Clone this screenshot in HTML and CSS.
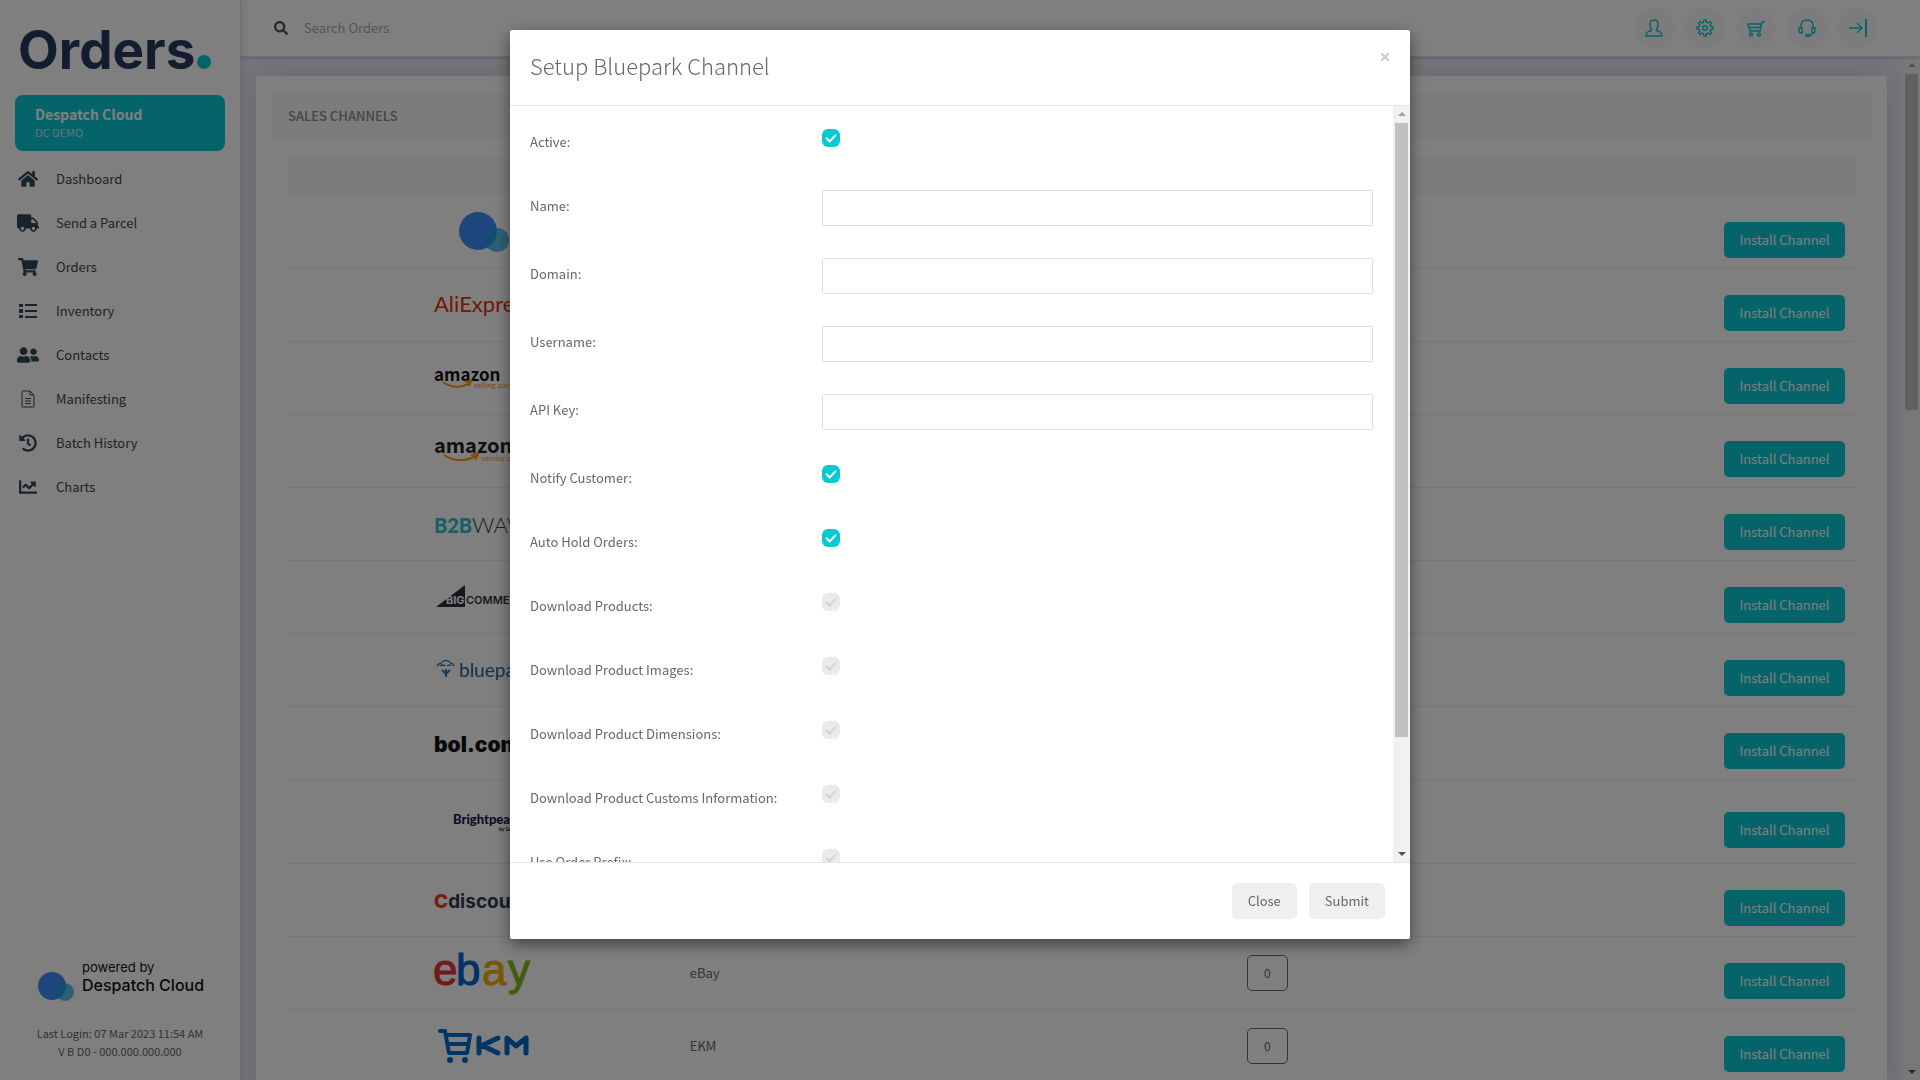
FILE: index.html
```
<!DOCTYPE html>
<html lang="en">
<head>
  <meta charset="UTF-8" />
  <meta name="viewport" content="width=device-width, initial-scale=1.0"/>
  <title>Orders - Sales Channels</title>
  <link rel="stylesheet" href="styles.css">
</head>
<body>
  <aside class="sidebar">
    <a href="#" class="brand">Orders<span class="brand-dot"></span></a>

    <div class="account">
      <strong>Despatch Cloud</strong>
      <small>DC DEMO</small>
    </div>

    <nav class="menu">
      <a href="#">
        <svg width="20" height="18" viewBox="0 0 576 512"><path d="M280.37 148.26L96 300.11V464a16 16 0 0 0 16 16l112.06-.29a16 16 0 0 0 15.92-16V368a16 16 0 0 1 16-16h64a16 16 0 0 1 16 16v95.64a16 16 0 0 0 16 16.05L464 480a16 16 0 0 0 16-16V300L295.67 148.26a12.19 12.19 0 0 0-15.3 0zM571.6 251.47L488 182.56V44.05a12 12 0 0 0-12-12h-56a12 12 0 0 0-12 12v72.61L318.47 43a48 48 0 0 0-61 0L4.34 251.47a12 12 0 0 0-1.6 16.9l25.5 31A12 12 0 0 0 45.15 301l235.22-193.74a12.19 12.19 0 0 1 15.3 0L530.9 301a12 12 0 0 0 16.9-1.6l25.5-31a12 12 0 0 0-1.7-16.93z"/></svg>
        <span>Dashboard</span>
      </a>
      <a href="#">
        <svg width="22" height="18" viewBox="0 0 640 512"><path d="M624 352h-16V243.900c0-12.700-5.100-24.900-14.100-33.900L494 110.100c-9-9-21.200-14.100-33.900-14.100H416V48c0-26.500-21.500-48-48-48H48C21.500 0 0 21.500 0 48v320c0 26.500 21.500 48 48 48h16c0 53 43 96 96 96s96-43 96-96h128c0 53 43 96 96 96s96-43 96-96h48c8.800 0 16-7.200 16-16v-32c0-8.800-7.200-16-16-16zM160 464c-26.500 0-48-21.500-48-48s21.500-48 48-48 48 21.500 48 48-21.500 48-48 48zm320 0c-26.500 0-48-21.500-48-48s21.500-48 48-48 48 21.500 48 48-21.500 48-48 48zm80-208H416V144h44.100l99.900 99.900V256z"/></svg>
        <span>Send a Parcel</span>
      </a>
      <a href="#">
        <svg width="20" height="18" viewBox="0 0 576 512"><path d="M528.12 301.319l47.273-208C578.806 78.301 567.391 64 551.99 64H159.208l-9.166-44.81C147.758 8.021 137.93 0 126.529 0H24C10.745 0 0 10.745 0 24v16c0 13.255 10.745 24 24 24h69.883l70.248 343.435C147.325 417.1 136 435.222 136 456c0 30.928 25.072 56 56 56s56-25.072 56-56c0-15.674-6.447-29.835-16.824-40h209.647C430.447 426.165 424 440.326 424 456c0 30.928 25.072 56 56 56s56-25.072 56-56c0-22.172-12.888-41.332-31.579-50.405l5.517-24.276c3.413-15.018-8.002-29.319-23.403-29.319H218.117l-6.545-32h293.145c11.206 0 20.92-7.754 23.403-18.681z"/></svg>
        <span>Orders</span>
      </a>
      <a href="#">
        <svg width="18" height="18" viewBox="0 0 18 18"><path d="M0 2h4v3H0zM0 7h4v4H0zM0 13h4v3H0zM6 2h12v2H6zM6 8h12v2H6zM6 14h12v2H6z"/></svg>
        <span>Inventory</span>
      </a>
      <a href="#">
        <svg width="22" height="18" viewBox="0 0 640 512"><path d="M192 256c61.900 0 112-50.100 112-112S253.900 32 192 32 80 82.100 80 144s50.100 112 112 112zm76.800 32h-8.300c-20.800 10-43.900 16-68.500 16s-47.600-6-68.500-16h-8.300C51.600 288 0 339.600 0 403.200V432c0 26.500 21.500 48 48 48h288c26.500 0 48-21.500 48-48v-28.800c0-63.600-51.600-115.200-115.200-115.200zM480 256c53 0 96-43 96-96s-43-96-96-96-96 43-96 96 43 96 96 96zm48 32h-3.800c-13.900 4.800-28.600 8-44.200 8s-30.300-3.200-44.200-8H432c-20.400 0-39.200 5.900-55.700 15.400 24.400 26.300 39.700 61.200 39.700 99.800v38.400c0 2.200-.5 4.300-.6 6.400H592c26.500 0 48-21.500 48-48 0-61.900-50.100-112-112-112z"/></svg>
        <span>Contacts</span>
      </a>
      <a href="#">
        <svg class="line" width="18" height="18" viewBox="0 0 18 18"><path d="M11 1H4Q3 1 3 2v14q0 1 1 1h10q1 0 1-1V5zM11 1v4h4M6 8.500h6M6 11h6M6 13.500h6"/></svg>
        <span>Manifesting</span>
      </a>
      <a href="#">
        <svg width="18" height="18" viewBox="0 0 512 512"><path d="M504 255.531c.253 136.640-111.180 248.372-247.820 248.468-59.015.042-113.223-20.530-155.822-54.911-11.077-8.940-11.905-25.541-1.839-35.607l11.267-11.267c8.609-8.609 22.353-9.551 31.891-1.984C173.062 425.135 212.781 440 256 440c101.705 0 184-82.311 184-184 0-101.705-82.311-184-184-184-48.814 0-93.149 18.969-126.068 49.932l50.754 50.754c10.080 10.080 2.941 27.314-11.313 27.314H24c-8.837 0-16-7.163-16-16V38.627c0-14.254 17.234-21.393 27.314-11.314l49.372 49.372C129.209 34.136 189.552 8 256 8c136.810 0 247.747 110.780 248 247.531zm-180.912 78.784l9.823-12.630c8.138-10.463 6.253-25.542-4.210-33.679L288 256.349V152c0-13.255-10.745-24-24-24h-16c-13.255 0-24 10.745-24 24v135.651l65.409 50.874c10.463 8.137 25.541 6.253 33.679-4.210z"/></svg>
        <span>Batch History</span>
      </a>
      <a href="#">
        <svg width="18" height="18" viewBox="0 0 512 512"><path d="M496 384H64V80c0-8.840-7.160-16-16-16H16C7.160 64 0 71.160 0 80v336c0 17.670 14.330 32 32 32h464c8.840 0 16-7.160 16-16v-32c0-8.840-7.160-16-16-16zM464 96H345.940c-21.380 0-32.090 25.850-16.970 40.970l32.400 32.400L288 242.750l-73.370-73.370c-12.500-12.500-32.760-12.500-45.250 0l-68.690 68.690c-6.250 6.250-6.250 16.380 0 22.630l22.620 22.620c6.250 6.250 16.380 6.250 22.630 0L192 237.250l73.370 73.370c12.500 12.500 32.760 12.500 45.250 0l96-96 32.400 32.400c15.120 15.120 40.970 4.410 40.970-16.970V112c.01-8.840-7.150-16-15.990-16z"/></svg>
        <span>Charts</span>
      </a>
    </nav>

    <div class="powered">
      <svg width="36" height="30" viewBox="0 0 36 30"><circle cx="14" cy="14" r="14" fill="#3f8cfb"/><circle cx="27" cy="20" r="9" fill="#1da1e0" fill-opacity=".7"/></svg>
      <p>powered by<b>Despatch Cloud</b></p>
    </div>
    <p class="login-info">Last Login: 07 Mar 2023 11:54 AM<br/>V B D0 - 000.000.000.000</p>
  </aside>

  <div class="main">
    <header class="topbar">
      <label class="search">
        <svg width="14" height="14" viewBox="0 0 512 512"><path d="M505 442.700L405.300 343c-4.500-4.500-10.600-7-17-7H372c27.600-35.300 44-79.700 44-128C416 93.100 322.900 0 208 0S0 93.100 0 208s93.100 208 208 208c48.300 0 92.700-16.400 128-44v16.300c0 6.400 2.500 12.500 7 17l99.700 99.700c9.400 9.400 24.600 9.400 33.900 0l28.300-28.300c9.400-9.400 9.400-24.600.1-34zM208 336c-70.700 0-128-57.200-128-128 0-70.700 57.200-128 128-128 70.700 0 128 57.200 128 128 0 70.700-57.200 128-128 128z"/></svg>
        <input type="text" placeholder="Search Orders" aria-label="Search Orders" />
      </label>
      <div class="top-icons">
        <a href="#" aria-label="Profile"><svg viewBox="0 0 18 18"><path d="M6.500 11.500v-1C5 9 5 7.500 5 5q0-4 4-4t4 4c0 2.500 0 4-1.500 5.500v1c3 1 5.500 1.500 5.500 5.500H1c0-4 2.500-4.500 5.500-5.500z"/></svg></a>
        <a href="#" aria-label="Settings"><svg viewBox="0 0 18 18"><circle cx="9" cy="9" r="2.200"/><path d="M8 1h2l.5 2.300 1.300.6 2.100-1.300 1.500 1.500-1.300 2.100.6 1.300L17 8v2l-2.300.5-.6 1.300 1.300 2.100-1.500 1.500-2.100-1.300-1.300.6L10 17H8l-.5-2.300-1.300-.6-2.100 1.300-1.500-1.500 1.300-2.100-.6-1.300L1 10V8l2.300-.5.6-1.300-1.300-2.100 1.500-1.500 2.100 1.300 1.300-.6z"/></svg></a>
        <a href="#" aria-label="Basket"><svg viewBox="0 0 18 18"><path d="M18 3h-3l-2 9H3L1 5h13.500M2 8.500h12"/><circle cx="4" cy="15.500" r="1.500"/><circle cx="12" cy="15.500" r="1.500"/></svg></a>
        <a href="#" aria-label="Support"><svg viewBox="0 0 18 18"><path d="M3 9V7q0-6 6-6t6 6v2M15 13q0 3-4 3.500"/><path d="M1 9h3v5H3Q1 14 1 12zM17 9h-3v5h1q2 0 2-2zM8 15.500h3v2H8z"/></svg></a>
        <a href="#" aria-label="Log out"><svg viewBox="0 0 18 18"><path d="M0 9h13M8 4l5 5-5 5"/><path d="M17 0v18" stroke-width="2"/></svg></a>
      </div>
    </header>

    <div class="content">
      <div class="page">
        <section class="card">
          <h2>SALES CHANNELS</h2>
          <div class="table-wrap">
            <table class="channels">
              <thead>
                <tr><th></th><th></th><th></th><th></th></tr>
              </thead>
              <tbody>
                <tr>
                  <td><svg width="50" height="40" viewBox="0 0 50 40"><circle cx="19" cy="19" r="19" fill="#3f8cfb"/><circle cx="38" cy="28" r="12" fill="#1da1e0" fill-opacity=".7"/></svg></td>
                  <td>Despatch Cloud</td><td><span class="count">0</span></td><td><button type="button" class="btn-install">Install Channel</button></td>
                </tr>
                <tr>
                  <td><svg width="100" height="40" viewBox="0 0 100 40"><text class="logo-text" x="0" y="27" font-size="22" fill="#e62e04">AliExpress</text></svg></td>
                  <td>AliExpress</td><td><span class="count">0</span></td><td><button type="button" class="btn-install">Install Channel</button></td>
                </tr>
                <tr>
                  <td><svg width="100" height="40" viewBox="0 0 100 40"><text class="logo-bold" x="0" y="23" font-size="17" fill="#111">amazon</text><text class="logo-text" x="40" y="30" font-size="8" fill="#f90">selling partner</text><path d="M9 24q13 9 27 1M31 24l6-1-2 5" fill="none" stroke="#f90" stroke-width="2"/></svg></td>
                  <td>Amazon</td><td><span class="count">0</span></td><td><button type="button" class="btn-install">Install Channel</button></td>
                </tr>
                <tr>
                  <td><svg width="100" height="40" viewBox="0 0 100 40"><text class="logo-bold" x="0" y="22" font-size="20" fill="#222">amazon</text><text class="logo-text" x="47" y="30" font-size="8" fill="#f90">vendor central</text><path d="M10 24q15 10 32 1M37 24l7-1-3 6" fill="none" stroke="#f90" stroke-width="2"/></svg></td>
                  <td>Amazon Vendor</td><td><span class="count">0</span></td><td><button type="button" class="btn-install">Install Channel</button></td>
                </tr>
                <tr>
                  <td><svg width="100" height="40" viewBox="0 0 100 40"><text class="logo-text" x="0" y="29" font-size="20" font-weight="900" fill="#2bc0cc">B2B</text><text class="logo-text" x="38" y="29" font-size="22" font-weight="300" fill="#444">WAVE</text></svg></td>
                  <td>B2B Wave</td><td><span class="count">0</span></td><td><button type="button" class="btn-install">Install Channel</button></td>
                </tr>
                <tr>
                  <td><svg width="100" height="40" viewBox="0 0 100 40"><path d="M2 30L31 8v22z" fill="#34313f"/><text class="logo-inter" x="12" y="27" font-size="11" font-weight="700" fill="#fff">BIG</text><text class="logo-inter" x="32" y="27" font-size="11" font-weight="600" fill="#34313f">COMMERCE</text></svg></td>
                  <td>BigCommerce</td><td><span class="count">0</span></td><td><button type="button" class="btn-install">Install Channel</button></td>
                </tr>
                <tr>
                  <td><svg width="100" height="40" viewBox="0 0 100 40"><g fill="none" stroke="#3c77b4"><path d="M3 16q2-3 5-3M8 12q4-3 8 0M16 13q3 0 4 3M6 16q3-2 5 0M13 16q2-2 4 0" stroke-width="1.500"/><path d="M12 27v-8M12 24l-4-4M12 24l4-4" stroke-width="2"/></g><text class="logo-text" x="25" y="27" font-size="19" fill="#2d5f99">bluepark</text></svg></td>
                  <td>Bluepark</td><td><span class="count">0</span></td><td><button type="button" class="btn-install">Install Channel</button></td>
                </tr>
                <tr>
                  <td><svg width="100" height="40" viewBox="0 0 100 40"><text class="logo-inter" x="0" y="29" font-size="21" font-weight="900" fill="#111">bol.com</text></svg></td>
                  <td>bol.com</td><td><span class="count">0</span></td><td><button type="button" class="btn-install">Install Channel</button></td>
                </tr>
                <tr class="tall">
                  <td><svg width="100" height="40" viewBox="0 0 100 40"><text class="logo-text" x="19" y="22" font-size="13" font-weight="900" fill="#101c4d">Brightpearl</text><text class="logo-text" x="65" y="29" font-size="5" font-weight="700" fill="#101c4d">by Sage</text></svg></td>
                  <td>Brightpearl</td><td><span class="count">0</span></td><td><button type="button" class="btn-install">Install Channel</button></td>
                </tr>
                <tr>
                  <td><svg width="100" height="40" viewBox="0 0 100 40"><text class="logo-inter" x="0" y="28" font-size="19" font-weight="700" fill="#2b3e55"><tspan fill="#f23c0f" font-weight="800">C</tspan>discount</text></svg></td>
                  <td>Cdiscount</td><td><span class="count">0</span></td><td><button type="button" class="btn-install">Install Channel</button></td>
                </tr>
                <tr>
                  <td><svg width="100" height="44" viewBox="0 0 100 44"><g class="logo-arial" font-size="44"><text x="-1" y="34" fill="#e53238" stroke="#e53238">e</text><text x="22" y="34" fill="#0064d2" stroke="#0064d2">b</text><text x="48" y="34" fill="#f5af02" stroke="#f5af02">a</text><text x="74" y="34" fill="#86b817" stroke="#86b817">y</text></g></svg></td>
                  <td>eBay</td><td><span class="count">0</span></td><td><button type="button" class="btn-install">Install Channel</button></td>
                </tr>
                <tr>
                  <td><svg width="100" height="40" viewBox="0 0 100 40"><g fill="none" stroke="#0069c8" stroke-width="5" stroke-linecap="round" stroke-linejoin="round"><path d="M6 5h5l4 22h18l3-18H14M15 18h18" stroke-width="4"/><path d="M45 12v15M64 12L48 19.500 64 27M73 27V12l9 8 10-8v15"/></g><circle cx="16" cy="34" r="3" fill="#0069c8"/><circle cx="31" cy="34" r="3" fill="#0069c8"/></svg></td>
                  <td>EKM</td><td><span class="count">0</span></td><td><button type="button" class="btn-install">Install Channel</button></td>
                </tr>
              </tbody>
            </table>
          </div>
        </section>
      </div>
      <div class="scrollbar" aria-hidden="true"><i class="arrow up"></i><div class="track"><div class="thumb thumb-page"></div></div><i class="arrow down"></i></div>
    </div>
  </div>

  <div class="backdrop">
    <form class="modal" role="dialog" aria-labelledby="modalTitle">
      <div class="modal-header">
        <h1 id="modalTitle">Setup Bluepark Channel</h1>
        <button type="button" class="btn-x" aria-label="Close dialog"><svg width="8" height="8" viewBox="0 0 8 8"><path d="M0 0l8 8M8 0L0 8"/></svg></button>
      </div>
      <div class="modal-scroll">
        <div class="modal-body">
          <div class="form-row"><label for="active">Active:</label><input type="checkbox" id="active" checked /></div>
          <div class="form-row"><label for="name">Name:</label><input type="text" id="name" /></div>
          <div class="form-row"><label for="domain">Domain:</label><input type="text" id="domain" /></div>
          <div class="form-row"><label for="username">Username:</label><input type="text" id="username" /></div>
          <div class="form-row"><label for="api_key">API Key:</label><input type="text" id="api_key" /></div>
          <div class="form-row"><label for="notify">Notify Customer:</label><input type="checkbox" id="notify" checked /></div>
          <div class="form-row"><label for="auto_hold">Auto Hold Orders:</label><input type="checkbox" id="auto_hold" checked /></div>
          <div class="form-row"><label for="products">Download Products:</label><input type="checkbox" id="products" /></div>
          <div class="form-row"><label for="images">Download Product Images:</label><input type="checkbox" id="images" /></div>
          <div class="form-row"><label for="dimensions">Download Product Dimensions:</label><input type="checkbox" id="dimensions" /></div>
          <div class="form-row"><label for="customs">Download Product Customs Information:</label><input type="checkbox" id="customs" /></div>
          <div class="form-row"><label for="prefix">Use Order Prefix:</label><input type="checkbox" id="prefix" /></div>
        </div>
        <div class="scrollbar" aria-hidden="true"><i class="arrow up"></i><div class="track"><div class="thumb thumb-modal"></div></div><i class="arrow down"></i></div>
      </div>
      <div class="modal-footer">
        <button type="button">Close</button>
        <button type="submit">Submit</button>
      </div>
    </form>
  </div>
</body>
</html>
```
FILE: styles.css
```
* {
  box-sizing: border-box;
}

body {
  margin: 0;
  display: flex;
  height: 100vh;
  overflow: hidden;
  font-family: "Noto Sans CJK SC", "Open Sans", sans-serif;
  font-size: 13px;
  line-height: 20px;
  color: #676767;
  background: #ebecf3;
}

a {
  color: inherit;
  text-decoration: none;
}

p {
  margin: 0;
}

button, input {
  font: inherit;
  color: inherit;
}

/* sidebar */
.sidebar {
  display: flex;
  flex-direction: column;
  width: 241px;
  flex-shrink: 0;
  padding: 20px 15px;
  background: #fff;
  border-right: 1px solid #dcdde6;
  box-shadow: 0 0 8px rgba(0, 0, 60, .15);
  z-index: 2;
}

.brand {
  display: flex;
  align-items: baseline;
  gap: 2px;
  height: 75px;
  padding-left: 3px;
  font-family: Inter, sans-serif;
  font-size: 53px;
  line-height: 60px;
  font-weight: 700;
  color: #273a60;
}

.brand-dot {
  width: 14px;
  height: 14px;
  border-radius: 50%;
  background: #08c8d4;
}

.account {
  display: flex;
  flex-direction: column;
  justify-content: center;
  height: 56px;
  padding: 0 0 2px 20px;
  border-radius: 8px;
  background: #08c8d4;
  color: #fff;
}

.account strong {
  font-size: 14px;
}

.account small {
  font-size: 11px;
  line-height: 16px;
  opacity: .7;
}

.menu {
  padding-top: 6px;
}

.menu a {
  display: grid;
  grid-template-columns: 26px 1fr;
  gap: 15px;
  align-items: center;
  height: 44px;
  color: #444;
}

.menu svg {
  justify-self: center;
  fill: #2f4858;
}

.menu .line {
  fill: none;
  stroke: #2f4858;
}

.powered {
  display: flex;
  align-items: center;
  gap: 8px;
  margin-top: auto;
  padding-left: 23px;
  color: #111;
  font-family: Inter, sans-serif;
  line-height: 18px;
}

.powered svg {
  margin-top: 20px;
}

.powered p {
  padding-bottom: 2px;
}

.powered b {
  display: block;
  font-size: 16px;
  font-weight: 500;
}

.login-info {
  padding-top: 22px;
  text-align: center;
  font-size: 11px;
  line-height: 18px;
}

/* main area */
.main {
  flex: 1;
  min-width: 0;
  display: flex;
  flex-direction: column;
}

.topbar {
  display: flex;
  align-items: center;
  justify-content: space-between;
  height: 57px;
  flex-shrink: 0;
  padding: 0 42px 0 33px;
  background: #fff;
  border-bottom: 1px solid #dcdde6;
  box-shadow: 0 1px 3px rgba(0, 0, 60, .2);
  z-index: 1;
}

.search {
  display: flex;
  align-items: center;
  gap: 16px;
}

.search svg {
  fill: #555;
}

.search input {
  width: 200px;
  padding: 0;
  border: none;
  background: none;
}

.search input::placeholder {
  color: #aaa;
}

.top-icons {
  display: flex;
  gap: 11px;
}

.top-icons a {
  display: grid;
  place-items: center;
  width: 40px;
  height: 40px;
  border-radius: 50%;
  background: #f9f9f9;
}

.top-icons svg {
  width: 18px;
  height: 18px;
  fill: none;
  stroke: #08c8d4;
  stroke-width: 1.4;
}

.content {
  flex: 1;
  min-height: 0;
  display: flex;
}

.page {
  flex: 1;
  overflow: hidden;
  padding: 19px 16px 0 15px;
}

.card {
  padding: 16px;
  border-radius: 2px;
  background: #fff;
  box-shadow: 0 0 30px rgba(0, 0, 0, .12);
}

.card h2 {
  margin: 0;
  padding: 14px 16px;
  border-radius: 4px;
  background: #f9f9f9;
  font-size: 13px;
  line-height: 20px;
  font-weight: 500;
  color: #8c8c8c;
}

.table-wrap {
  padding: 16px 16px 0;
}

.channels {
  width: 100%;
  table-layout: fixed;
  border-collapse: separate;
  border-spacing: 0;
}

.channels th {
  height: 40px;
  padding: 0;
  background: #f9f9f9;
}

.channels th:first-child {
  border-radius: 6px 0 0 6px;
}

.channels th:last-child {
  border-radius: 0 6px 6px 0;
}

.channels td {
  height: 73px;
  padding: 0 10px;
  border-bottom: 1px solid #eaeaea;
}

.channels .tall td {
  height: 84px;
}

.channels td:nth-child(odd) {
  text-align: center;
}

.channels td:last-child {
  text-align: right;
}

.channels svg {
  display: block;
  margin: 0 auto;
  overflow: visible;
}

.logo-text {
  font-family: Lato, sans-serif;
}

.logo-bold {
  font-family: "Noto Sans CJK SC", sans-serif;
  font-weight: 700;
}

.logo-inter {
  font-family: Inter, sans-serif;
}

.logo-arial {
  font-family: "Liberation Sans", sans-serif;
}

.count {
  display: inline-block;
  width: 41px;
  height: 36px;
  border: 1px solid #676767;
  border-radius: 5px;
  font-size: 12px;
  line-height: 34px;
}

.btn-install {
  width: 121px;
  height: 36px;
  margin-top: 16px;
  padding: 0;
  border: none;
  border-radius: 5px;
  background: #08c8d4;
  color: #fff;
}

/* scrollbars */
.scrollbar {
  display: flex;
  flex-direction: column;
  align-items: center;
  justify-content: space-between;
  width: 17px;
  flex-shrink: 0;
  background: #f1f1f1;
}

.track {
  flex: 1;
  width: 13px;
}

.thumb {
  background: #c1c1c1;
}

.thumb-page {
  height: 34%;
}

.thumb-modal {
  height: 85%;
}

.arrow {
  border: 4px solid transparent;
}

.up {
  border-top-width: 6px;
  border-bottom-color: #a3a3a3;
  margin-bottom: 7px;
}

.down {
  border-top-color: #505050;
  margin-top: 7px;
  margin-bottom: 2px;
}

/* modal */
.backdrop {
  position: fixed;
  inset: 0;
  z-index: 10;
  display: flex;
  justify-content: center;
  align-items: flex-start;
  padding-top: 30px;
  background: rgba(0, 0, 0, .5);
}

.modal {
  width: 900px;
  max-width: 100%;
  border-radius: 2px;
  background: #fff;
  box-shadow: 0 5px 15px rgba(0, 0, 0, .5);
}

.modal-header {
  display: flex;
  justify-content: space-between;
  align-items: flex-start;
  padding: 19px 17px 24px 20px;
  border-bottom: 1px solid #e5e5e5;
}

.modal-header h1 {
  margin: 0;
  font-size: 22px;
  line-height: 32px;
  font-weight: 300;
}

.btn-x {
  display: flex;
  padding: 4px;
  border: none;
  background: none;
}

.btn-x path {
  stroke: #ccc;
  stroke-width: 2;
}

.modal-scroll {
  display: flex;
  height: 70vh;
}

.modal-body {
  flex: 1;
  overflow: hidden;
  padding: 20px;
}

.form-row {
  display: flex;
  align-items: flex-start;
  min-height: 32px;
  margin-bottom: 32px;
}

.form-row label {
  width: 292px;
  flex-shrink: 0;
  padding-top: 6px;
}

.form-row input[type="text"] {
  flex: 1;
  height: 36px;
  padding: 6px 12px;
  border: 1px solid #ddd;
  border-radius: 2px;
}

.form-row input[type="checkbox"] {
  appearance: none;
  width: 18px;
  height: 18px;
  margin: 3px 0 0;
  border-radius: 6px;
  background: #e9eaec;
}

/* tick mark */
.form-row input[type="checkbox"]::before {
  content: "";
  display: block;
  box-sizing: border-box;
  width: 10px;
  height: 6px;
  margin: 5px 4px;
  border: solid #d3d4d6;
  border-width: 0 0 2px 2px;
  transform: rotate(-45deg);
}

.form-row input[type="checkbox"]:checked {
  background: #08c8d4;
}

.form-row input[type="checkbox"]:checked::before {
  border-color: #fff;
}

.modal-footer {
  display: flex;
  justify-content: flex-end;
  gap: 12px;
  padding: 20px 25px;
  border-top: 1px solid #e5e5e5;
}

.modal-footer button {
  height: 36px;
  padding: 0 16px;
  border: none;
  border-radius: 5px;
  background: #efefef;
}
```
